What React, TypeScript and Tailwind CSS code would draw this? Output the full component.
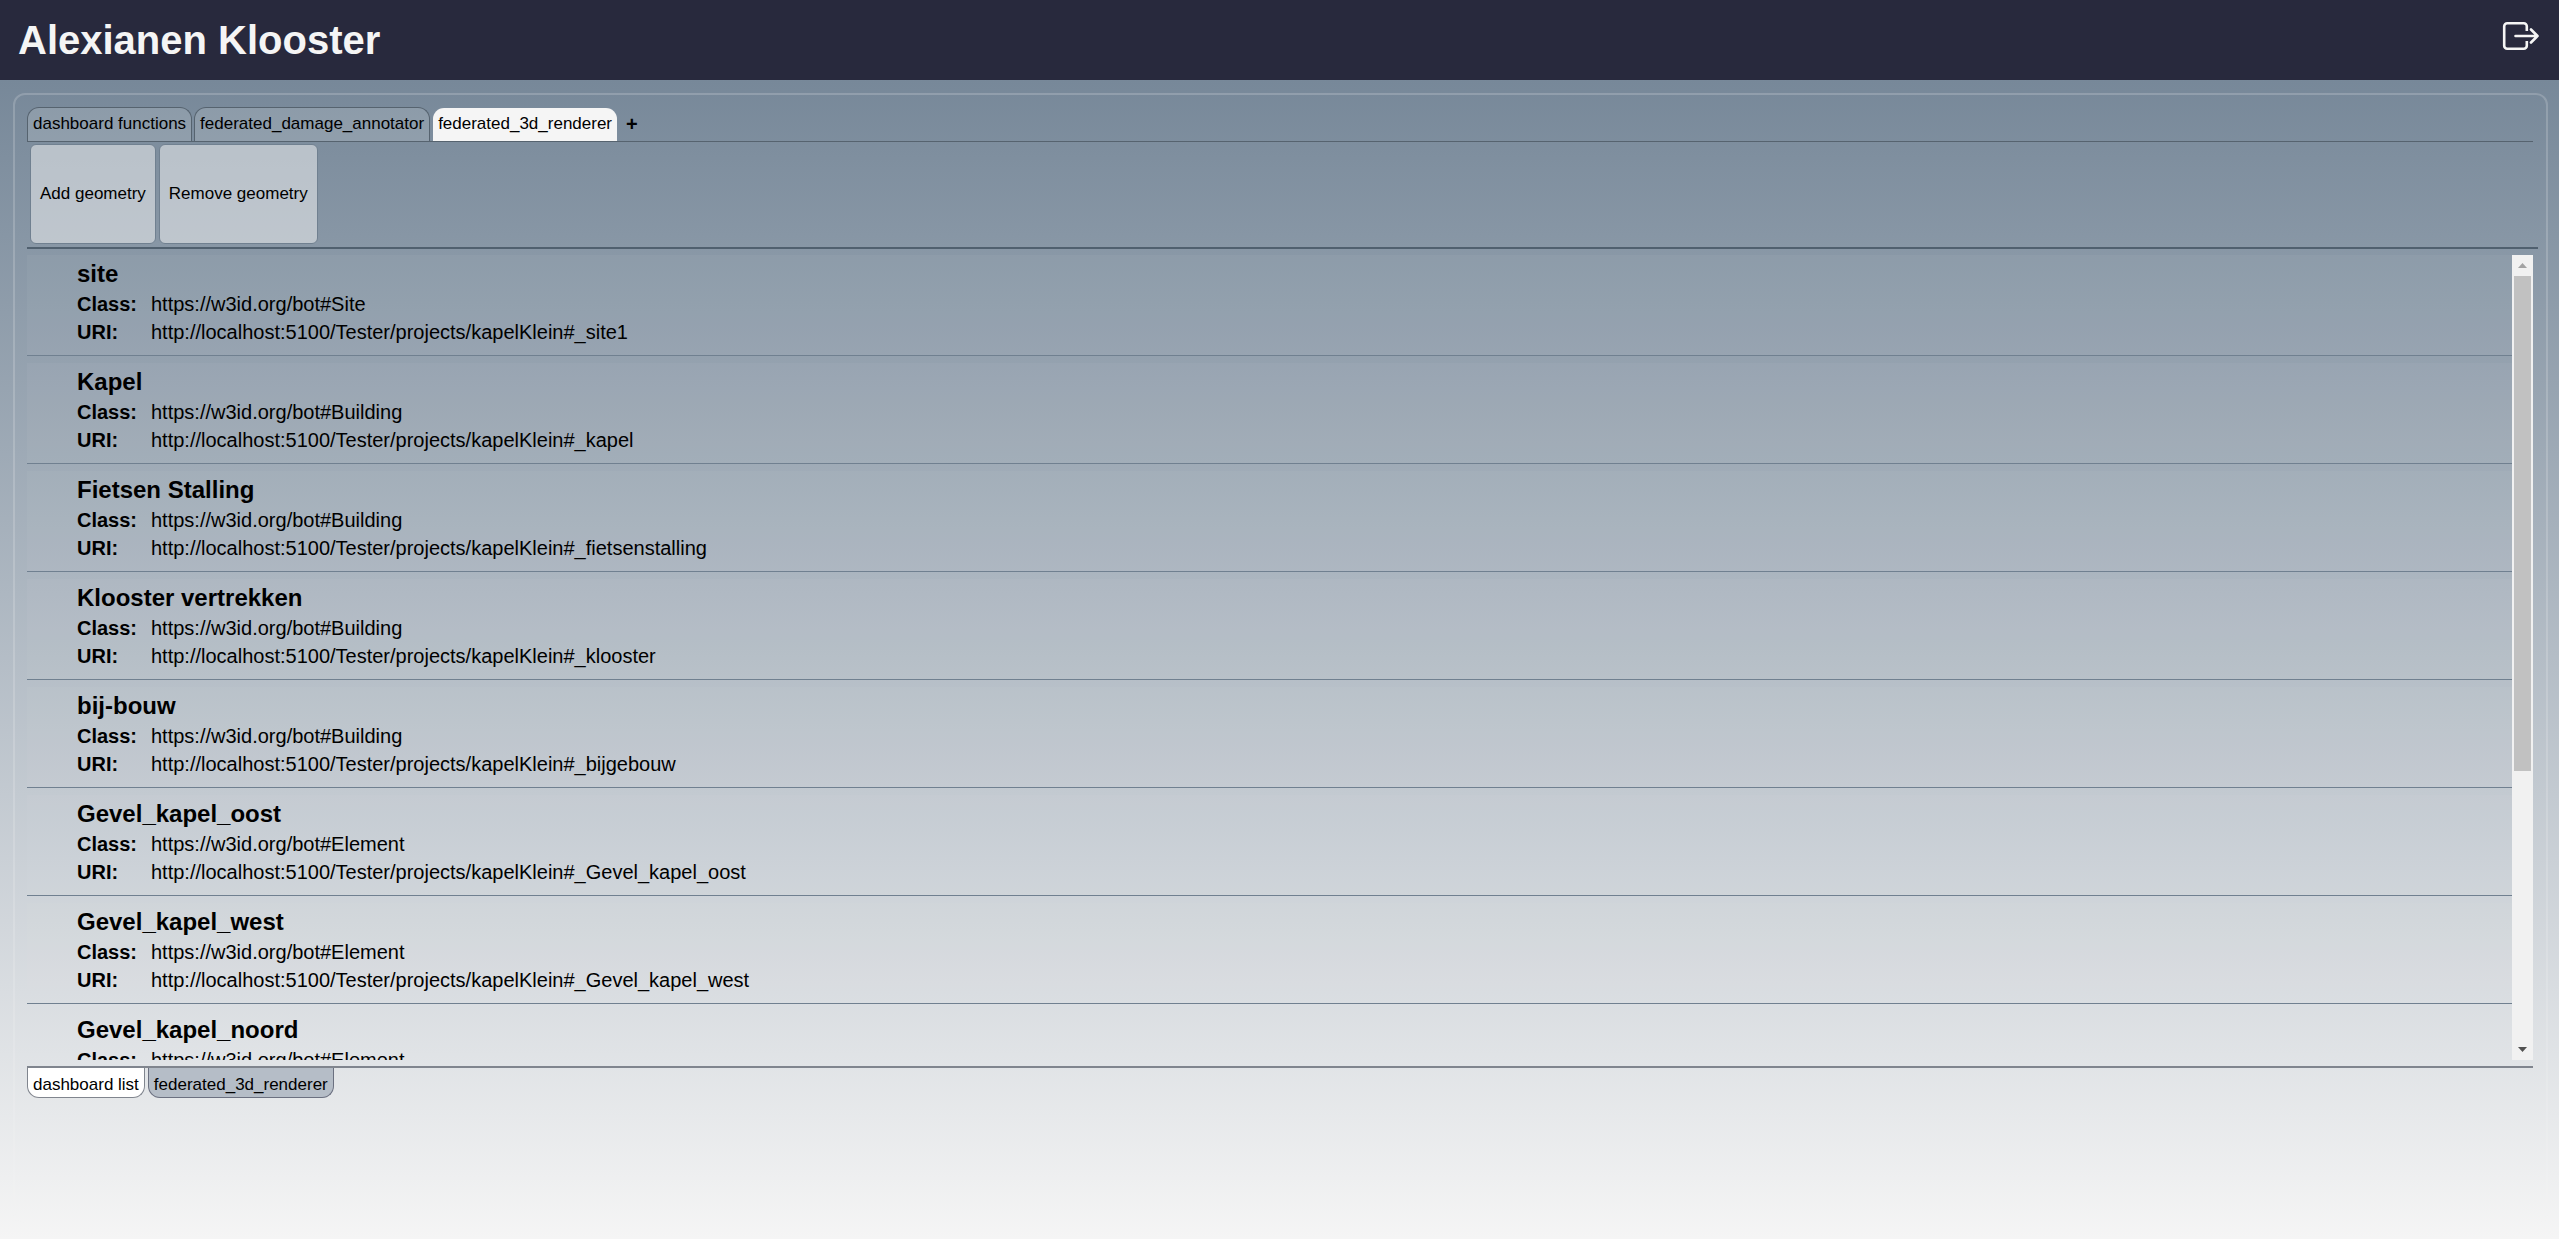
const items = [
  { name: "site", type: "Site", id: "_site1" },
  { name: "Kapel", type: "Building", id: "_kapel" },
  { name: "Fietsen Stalling", type: "Building", id: "_fietsenstalling" },
  { name: "Klooster vertrekken", type: "Building", id: "_klooster" },
  { name: "bij-bouw", type: "Building", id: "_bijgebouw" },
  { name: "Gevel_kapel_oost", type: "Element", id: "_Gevel_kapel_oost" },
  { name: "Gevel_kapel_west", type: "Element", id: "_Gevel_kapel_west" },
  { name: "Gevel_kapel_noord", type: "Element", id: "_Gevel_kapel_noord" },
];

const topTabs = [
  { label: "dashboard functions", active: false },
  { label: "federated_damage_annotator", active: false },
  { label: "federated_3d_renderer", active: true },
];

function LogoutIcon() {
  return (
    <svg width="37" height="30" viewBox="0 0 37 30" fill="none" stroke="#f5f5f5" strokeWidth="2.6" strokeLinecap="round" strokeLinejoin="round" aria-hidden="true">
      <path strokeLinecap="butt" d="M24.800 10V5.200a3 3 0 0 0-3-3H5.200a3 3 0 0 0-3 3v19.600a3 3 0 0 0 3 3h16.600a3 3 0 0 0 3-3V20" />
      <path d="M13.500 15H35.500M29 8.500l6.500 6.500-6.500 6.500" />
    </svg>
  );
}

function TopTabs() {
  return (
    <div role="tablist" className="mr-[13px] flex items-end gap-0.5 border-b border-[#56636f]">
      {topTabs.map((t) => (
        <button
          key={t.label}
          role="tab"
          aria-selected={t.active}
          className={
            t.active
              ? "h-[34px] rounded-t-xl border border-b-0 border-transparent bg-[#f5f5f5] bg-clip-padding px-[5px] pb-0.5"
              : "h-[34px] rounded-t-xl border border-b-0 border-[#56636f] bg-white/15 px-[5px] pb-0.5"
          }
        >
          {t.label}
        </button>
      ))}
      <button aria-label="Add tab" className="h-[34px] px-1.5 text-xl font-bold">
        +
      </button>
    </div>
  );
}

function Scrollbar() {
  return (
    <div aria-hidden="true" className="flex w-[21px] shrink-0 flex-col items-center bg-[#f1f1f1]">
      <div className="flex h-[21px] items-center">
        <svg width="9" height="5" viewBox="0 0 9 5" fill="#a3a3a3"><path d="M4.500 0L9 5H0z" /></svg>
      </div>
      <div className="h-[495px] w-[17px] bg-[#c1c1c1]" />
      <div className="mt-auto flex h-[21px] items-center">
        <svg width="9" height="5" viewBox="0 0 9 5" fill="#505050"><path d="M4.500 5L9 0H0z" /></svg>
      </div>
    </div>
  );
}

function ItemList() {
  return (
    <div className="mt-1.5 mr-[13px] flex h-[805px]">
      <ul className="flex min-w-0 flex-1 flex-col gap-[7px] overflow-hidden">
        {items.map((it) => (
          <li key={it.id} className="shrink-0 border-b border-[#708090] bg-[#f5f5f5]/5 pt-[3px] pb-[9px] pl-[50px]">
            <h3 className="text-2xl leading-8 font-bold">{it.name}</h3>
            <dl className="grid grid-cols-[74px_1fr] text-xl leading-7">
              <dt className="font-bold">Class:</dt>
              <dd>https://w3id.org/bot#{it.type}</dd>
              <dt className="font-bold">URI:</dt>
              <dd>http://localhost:5100/Tester/projects/kapelKlein#{it.id}</dd>
            </dl>
          </li>
        ))}
      </ul>
      <Scrollbar />
    </div>
  );
}

export default function App() {
  return (
    <div className="flex min-h-screen flex-col font-['Liberation_Sans',Arial,sans-serif] text-[17px] text-black">
      <header className="flex h-20 shrink-0 items-center justify-between bg-[#28293d] pr-5 pl-[18px]">
        <h1 className="text-[40px] font-bold text-[#f5f5f5]">Alexianen Klooster</h1>
        <button aria-label="Log out" className="pb-2">
          <LogoutIcon />
        </button>
      </header>
      <div className="flex flex-1 flex-col bg-linear-to-b from-[#778899] to-[#f5f5f5] pt-[13px] pr-[11px] pb-3.5 pl-[13px]">
        <main className="flex-1 rounded-xl border-2 border-[#f5f5f5]/20 pt-3 pl-3">
          <TopTabs />
          <div className="mr-2 flex gap-[3px] border-b-2 border-[#50606f] pt-0.5 pb-[3px] pl-[3px]">
            <button className="h-[100px] rounded-md border border-[#708090] bg-[#f5f5f5]/50 px-[9px]">Add geometry</button>
            <button className="h-[100px] rounded-md border border-[#708090] bg-[#f5f5f5]/50 px-[9px]">Remove geometry</button>
          </div>
          <ItemList />
          <div role="tablist" className="mt-1.5 mr-[13px] flex gap-[3px] border-t-2 border-[#80858e]">
            <button role="tab" aria-selected="true" className="h-[30px] rounded-b-xl border border-t-0 border-[#80858e] bg-white px-[5px] pt-1">
              dashboard list
            </button>
            <button role="tab" aria-selected="false" className="h-[30px] rounded-b-xl border border-t-0 border-[#6b7080] bg-[#b5bdc7] px-[5px] pt-1">
              federated_3d_renderer
            </button>
          </div>
        </main>
      </div>
    </div>
  );
}
